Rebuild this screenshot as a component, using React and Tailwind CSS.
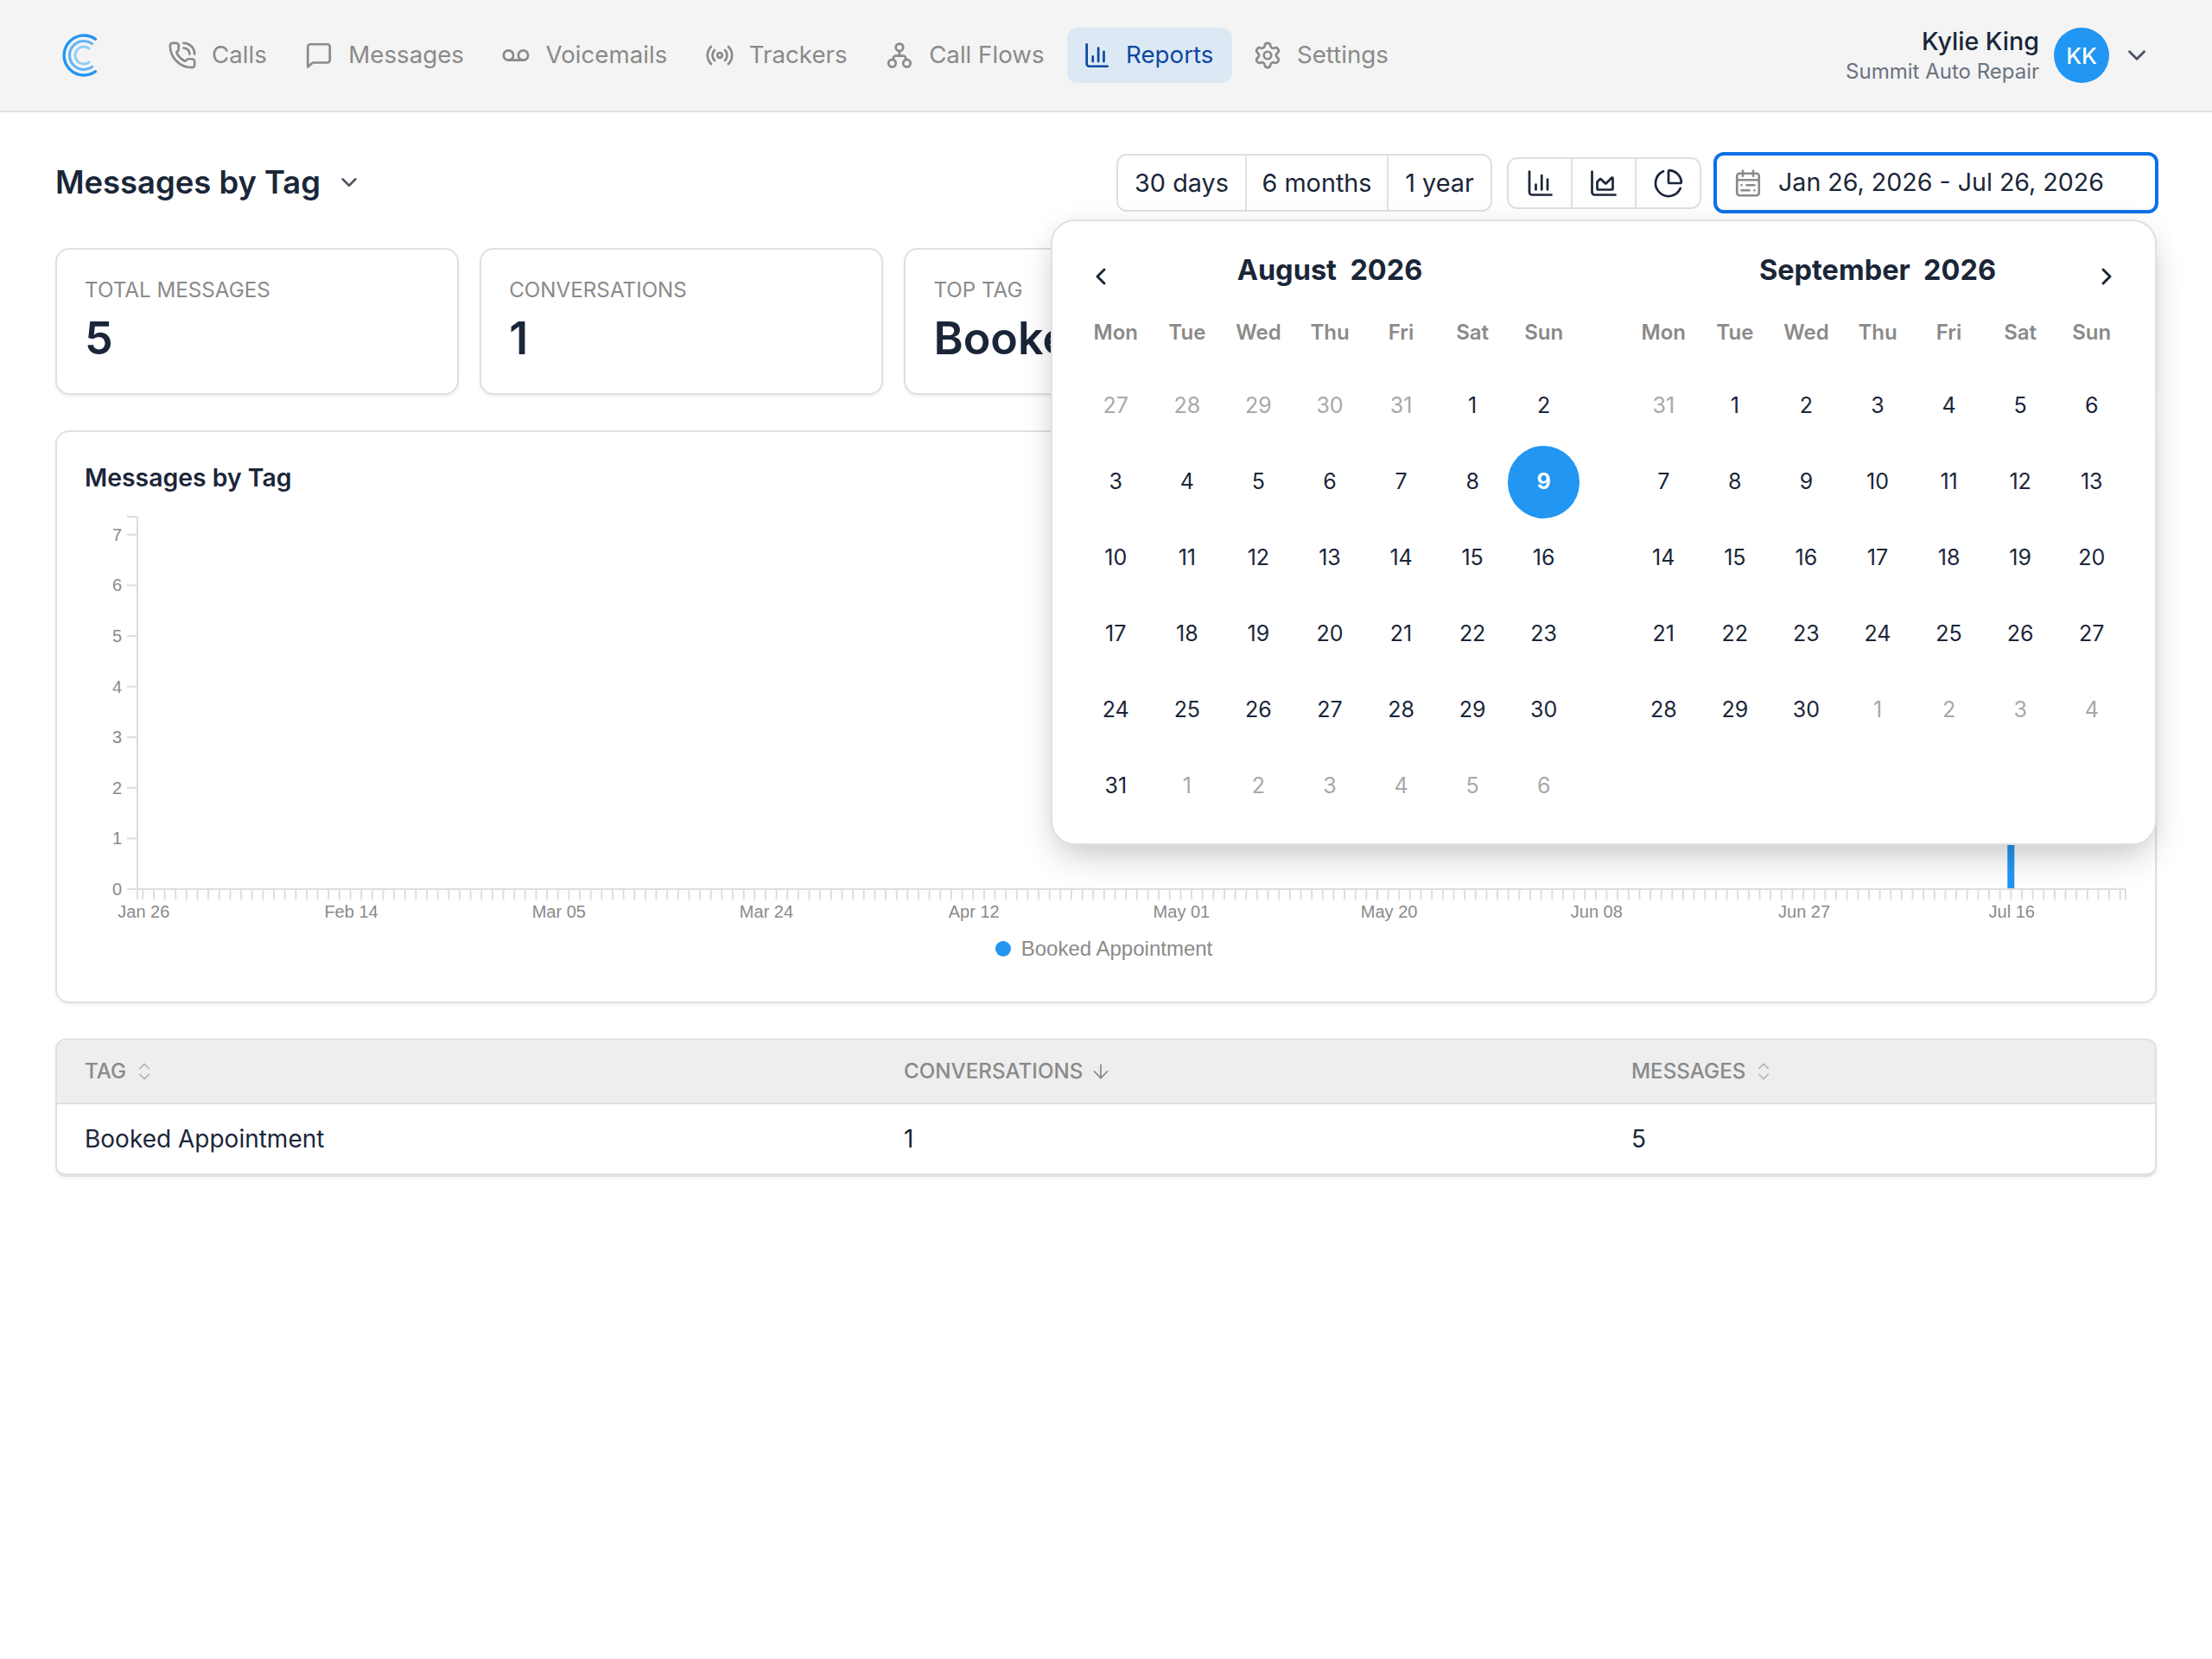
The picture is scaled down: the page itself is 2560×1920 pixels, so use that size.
import React from "react";
import { PhoneCall, Voicemail, Radio, Settings, ChevronDown, ChevronLeft, ChevronRight, ChartArea, ChartPie, ChevronsUpDown, ArrowDown } from "lucide-react";

const Logo = () => (
  <svg width="48" height="56" viewBox="0 0 48 56" fill="none" strokeLinecap="round" className="shrink-0">
    <path d="M39.5 9.3A23 23 0 1 0 39.5 46.7" stroke="#2196f3" strokeWidth="3.4" />
    <path d="M35.5 14.5A16.5 16.5 0 1 0 35.5 41.5" stroke="#64b5f6" strokeWidth="3.2" />
    <path d="M32 20A10 10 0 1 0 32 36" stroke="#90d0f8" strokeWidth="3" />
  </svg>
);

const MessageIcon = ({ size = 34 }) => (
  <svg width={size} height={size} viewBox="0 0 24 24" fill="none" stroke="currentColor" strokeWidth="1.9" strokeLinecap="round" strokeLinejoin="round">
    <path d="M21 16a2 2 0 0 1-2 2H7l-4 3.5V5a2 2 0 0 1 2-2h14a2 2 0 0 1 2 2z" />
  </svg>
);

const FlowIcon = ({ size = 34 }) => (
  <svg width={size} height={size} viewBox="0 0 24 24" fill="none" stroke="currentColor" strokeWidth="1.9" strokeLinecap="round" strokeLinejoin="round">
    <circle cx="12" cy="5.5" r="3" />
    <circle cx="6" cy="18.5" r="3" />
    <circle cx="18" cy="18.5" r="3" />
    <path d="M12 8.5v4M7 15.5v-1a2 2 0 0 1 2-2h6a2 2 0 0 1 2 2v1" />
  </svg>
);

const BarsIcon = ({ size = 34, sw = 1.9 }) => (
  <svg width={size} height={size} viewBox="0 0 24 24" fill="none" stroke="currentColor" strokeWidth={sw} strokeLinecap="round" strokeLinejoin="round">
    <path d="M4 3v16a2 2 0 0 0 2 2h15" />
    <path d="M9 17v-4M13.5 17V6M18 17V9" />
  </svg>
);

const CalIcon = ({ size = 36 }) => (
  <svg width={size} height={size} viewBox="0 0 24 24" fill="none" stroke="currentColor" strokeWidth="1.8" strokeLinecap="round" strokeLinejoin="round">
    <rect x="3.5" y="4.5" width="17" height="17" rx="2" />
    <path d="M3.5 9.5h17M8 2.5v4M16 2.5v4M7 13.5h.01M11 13.5h6M7 17.5h6M17 17.5h.01" />
  </svg>
);

const navItems = [
  ["Calls", <PhoneCall size={34} strokeWidth={1.9} />],
  ["Messages", <MessageIcon />],
  ["Voicemails", <Voicemail size={34} strokeWidth={1.9} />],
  ["Trackers", <Radio size={34} strokeWidth={1.9} />],
  ["Call Flows", <FlowIcon />],
  ["Reports", <BarsIcon />],
  ["Settings", <Settings size={34} strokeWidth={1.9} />],
];

const Header = () => (
  <header className="h-[130px] bg-[#f4f4f4] border-b-2 border-[#e0e0e0] flex items-center pl-[71px] pr-[70px]">
    <Logo />
    <nav className="flex items-center gap-[6.5px] ml-[58px]">
      {navItems.map(([label, icon]) => {
        const active = label === "Reports";
        return (
          <div
            key={label}
            className={
              "h-[64px] pl-[17px] rounded-[12px] flex items-center gap-[17px] text-[27.7px] " +
              (active ? "pr-[22px] bg-[#dce9f5] text-[#0d47a1]" : "pr-[20px] text-[#8a8a8a]")
            }
          >
            {icon}
            <span>{label}</span>
          </div>
        );
      })}
    </nav>
    <div className="ml-auto flex items-center">
      <div className="text-right mr-[17px]">
        <div className="text-[28.6px] leading-[38px] font-medium text-[#1a2638]">Kylie King</div>
        <div className="text-[24px] leading-[32px] text-[#6b7280]">Summit Auto Repair</div>
      </div>
      <div className="w-[64px] h-[64px] rounded-full bg-[#2196f3] text-white text-[26px] font-medium flex items-center justify-center">KK</div>
      <ChevronDown size={34} strokeWidth={2} className="ml-[15px] text-[#4b5563]" />
    </div>
  </header>
);

const StatCard = ({ label, value }) => (
  <div className="min-w-0 overflow-hidden h-[170px] border-2 border-[#e0e0e0] rounded-[16px] shadow-[0_2px_4px_rgba(0,0,0,0.06)] px-[32px] pt-[29px] bg-white">
    <div className="text-[24.2px] leading-[36px] text-[#8a8a8a] uppercase whitespace-nowrap">{label}</div>
    <div className="text-[52px] leading-[64px] mt-[6px] font-semibold text-[#1a2638] whitespace-nowrap">{value}</div>
  </div>
);

const days = Array.from({ length: 182 }, (_, i) => i);

const Chart = () => {
  const ox = 93;
  const step = 12.643;
  const top = 20;
  const base = 451;
  const unit = 58.6;
  const tx = (i) => ox + step * (i + 0.5);
  const labels = ["Jan 26", "Feb 14", "Mar 05", "Mar 24", "Apr 12", "May 01", "May 20", "Jun 08", "Jun 27", "Jul 16"];
  return (
    <svg width="2428" height="500" className="block" style={{ fontFamily: '"Liberation Sans", Arial, sans-serif' }}>
      <line x1={ox} y1={top} x2={ox} y2={base} stroke="#dddddd" strokeWidth="2" />
      <line x1={ox - 12} y1={top} x2={ox} y2={top} stroke="#dddddd" strokeWidth="2" />
      {[0, 1, 2, 3, 4, 5, 6, 7].map((v) => (
        <g key={v}>
          <line x1={ox - 12} x2={ox} y1={base - v * unit} y2={base - v * unit} stroke="#dddddd" strokeWidth="2" />
          <text x={ox - 18} y={base - v * unit + 7} textAnchor="end" fontSize="20" fill="#8a8a8a">{v}</text>
        </g>
      ))}
      <line x1={ox - 12} x2={ox + step * 182} y1={base} y2={base} stroke="#dddddd" strokeWidth="2" />
      <line x1={ox} x2={ox} y1={base} y2={base + 12} stroke="#dddddd" strokeWidth="2" />
      {days.map((i) => (
        <line key={i} x1={tx(i)} x2={tx(i)} y1={base} y2={base + 12} stroke="#dddddd" strokeWidth="2" />
      ))}
      <line x1={ox + step * 182} x2={ox + step * 182} y1={base} y2={base + 12} stroke="#dddddd" strokeWidth="2" />
      {labels.map((l, k) => (
        <text key={l} x={tx(k * 19) + 1} y={base + 33} textAnchor="middle" fontSize="20" fill="#8a8a8a">{l}</text>
      ))}
      <rect x={tx(171) - 4} y={base - 5 * unit} width="8" height={5 * unit - 1} fill="#2196f3" />
    </svg>
  );
};

const Legend = () => (
  <div className="flex items-center justify-center gap-[12px] mt-[7px] pr-[5px]" style={{ fontFamily: '"Liberation Sans", Arial, sans-serif' }}>
    <span className="w-[18px] h-[18px] rounded-full bg-[#2196f3]" />
    <span className="text-[24px] leading-[26px] text-[#8a8a8a]">Booked Appointment</span>
  </div>
);

const WD = ["Mon", "Tue", "Wed", "Thu", "Fri", "Sat", "Sun"];

const Month = ({ title, cells, selected }) => (
  <div className="w-[578px]">
    <div className="h-[48px] flex items-center justify-center text-[32.5px] font-bold text-[#1a2638] whitespace-pre">{title}</div>
    <div className="grid grid-cols-7 mt-[18px] h-[60px] items-center">
      {WD.map((d) => (
        <div key={d} className="text-center text-[24px] font-semibold text-[#8a8a8a]">{d}</div>
      ))}
    </div>
    <div className="grid grid-cols-7 gap-y-[4px] mt-[13px]">
      {cells.map(([n, muted], i) => {
        const sel = !muted && n === selected;
        return (
          <div
            key={i}
            className={
              "h-[84px] flex items-center justify-center text-[25px] rounded-full " +
              (sel ? "bg-[#2196f3] text-white font-bold" : muted ? "text-[#a8a8a8]" : "text-[#1a2638]")
            }
          >
            {n}
          </div>
        );
      })}
    </div>
  </div>
);

const range = (a, b, muted = false) => {
  const out = [];
  for (let i = a; i <= b; i++) out.push([i, muted]);
  return out;
};

const aug = [...range(27, 31, true), ...range(1, 31), ...range(1, 6, true)];
const sep = [...range(31, 31, true), ...range(1, 30), ...range(1, 4, true)];

const Popup = () => (
  <div className="absolute left-[1216px] top-[124px] w-[1280px] h-[724px] bg-white border-2 border-[#e0e0e0] rounded-[28px] shadow-[0_20px_40px_-8px_rgba(0,0,0,0.2),0_0_30px_rgba(0,0,0,0.05)] z-10 pt-[33px] pl-[32px] flex gap-[56px]">
    <ChevronLeft size={32} strokeWidth={2.2} className="absolute left-[40px] top-[48px] text-[#1a2638]" />
    <ChevronRight size={32} strokeWidth={2.2} className="absolute right-[40px] top-[48px] text-[#1a2638]" />
    <Month title="August  2026" cells={aug} selected={9} />
    <Month title="September  2026" cells={sep} selected={-1} />
  </div>
);

const Toolbar = () => (
  <div className="flex items-center justify-between h-[71px]">
    <div className="flex items-center gap-[18px]">
      <h1 className="text-[36.4px] font-semibold text-[#1a2638]">Messages by Tag</h1>
      <ChevronDown size={30} strokeWidth={2} className="text-[#4b5563]" />
    </div>
    <div className="flex items-center mr-[-2px]">
      <div className="flex h-[67px] border-2 border-[#e0e0e0] rounded-[12px] text-[28.8px] text-[#1a2638]">
        <div className="w-[149px] flex items-center justify-center border-r-2 border-[#e0e0e0]">30 days</div>
        <div className="w-[164px] flex items-center justify-center border-r-2 border-[#e0e0e0]">6 months</div>
        <div className="w-[118px] flex items-center justify-center">1 year</div>
      </div>
      <div className="ml-[17px] flex h-[60px] border-2 border-[#e0e0e0] rounded-[12px] text-[#1a2638]">
        <div className="w-[74px] flex items-center justify-center border-r-2 border-[#e0e0e0]"><BarsIcon size={36} sw={1.8} /></div>
        <div className="w-[74px] flex items-center justify-center border-r-2 border-[#e0e0e0]"><ChartArea size={36} strokeWidth={1.8} /></div>
        <div className="w-[73px] flex items-center justify-center"><ChartPie size={36} strokeWidth={1.8} /></div>
      </div>
      <div className="ml-[14px] w-[515px] h-[71px] border-4 border-[#0f6fe8] rounded-[12px] flex items-center pl-[18px] text-[28.6px] text-[#1a2638] whitespace-nowrap">
        <span className="text-[#8a8a8a] mr-[17px]"><CalIcon size={36} /></span>
        <span>Jan 26, 2026 - Jul 26, 2026</span>
      </div>
    </div>
  </div>
);

const Th = ({ children, icon, cls }) => (
  <div className={"flex items-center gap-[8px] text-[24.2px] font-medium text-[#8a8a8a] uppercase " + cls}>
    <span>{children}</span>
    {icon}
  </div>
);

const Sort = () => <ChevronsUpDown size={26} strokeWidth={1.5} className="text-[#b5b5b5]" />;

const Table = () => (
  <div className="mt-[41px] border-x-2 border-t-2 border-b-4 border-[#e0e0e0] rounded-[12px] overflow-hidden shadow-[0_2px_4px_rgba(0,0,0,0.06)]">
    <div className="h-[74px] bg-[#eeeeee] border-b-2 border-[#e0e0e0] flex items-center pl-[32px]">
      <Th cls="w-[948px]" icon={<Sort />}>Tag</Th>
      <Th cls="w-[842px]" icon={<ArrowDown size={26} strokeWidth={1.6} className="text-[#8a8a8a]" />}>Conversations</Th>
      <Th cls="" icon={<Sort />}>Messages</Th>
    </div>
    <div className="h-[80px] flex items-center pl-[32px] text-[28px] text-[#1a2638]">
      <div className="w-[948px]">Booked Appointment</div>
      <div className="w-[842px]">1</div>
      <div>5</div>
    </div>
  </div>
);

export default function App() {
  return (
    <div className="min-h-[1920px] bg-white" style={{ fontFamily: 'Inter, "Liberation Sans", sans-serif' }}>
      <Header />
      <main className="relative px-[64px] pt-[46px]">
        <Toolbar />
        <div className="grid grid-cols-5 gap-[24px] mt-[40px]">
          <StatCard label="Total Messages" value="5" />
          <StatCard label="Conversations" value="1" />
          <StatCard label="Top Tag" value="Booked Appointment" />
          <StatCard label="" value="" />
          <StatCard label="" value="" />
        </div>
        <div className="mt-[41px] h-[663px] border-2 border-[#e0e0e0] rounded-[16px] shadow-[0_2px_4px_rgba(0,0,0,0.06)] overflow-hidden">
          <div className="pl-[32px] pt-[34px] text-[28.4px] leading-[38px] font-semibold text-[#1a2638]">Messages by Tag</div>
          <div className="mt-[6px]"><Chart /></div>
          <Legend />
        </div>
        <Table />
        <Popup />
      </main>
    </div>
  );
}
